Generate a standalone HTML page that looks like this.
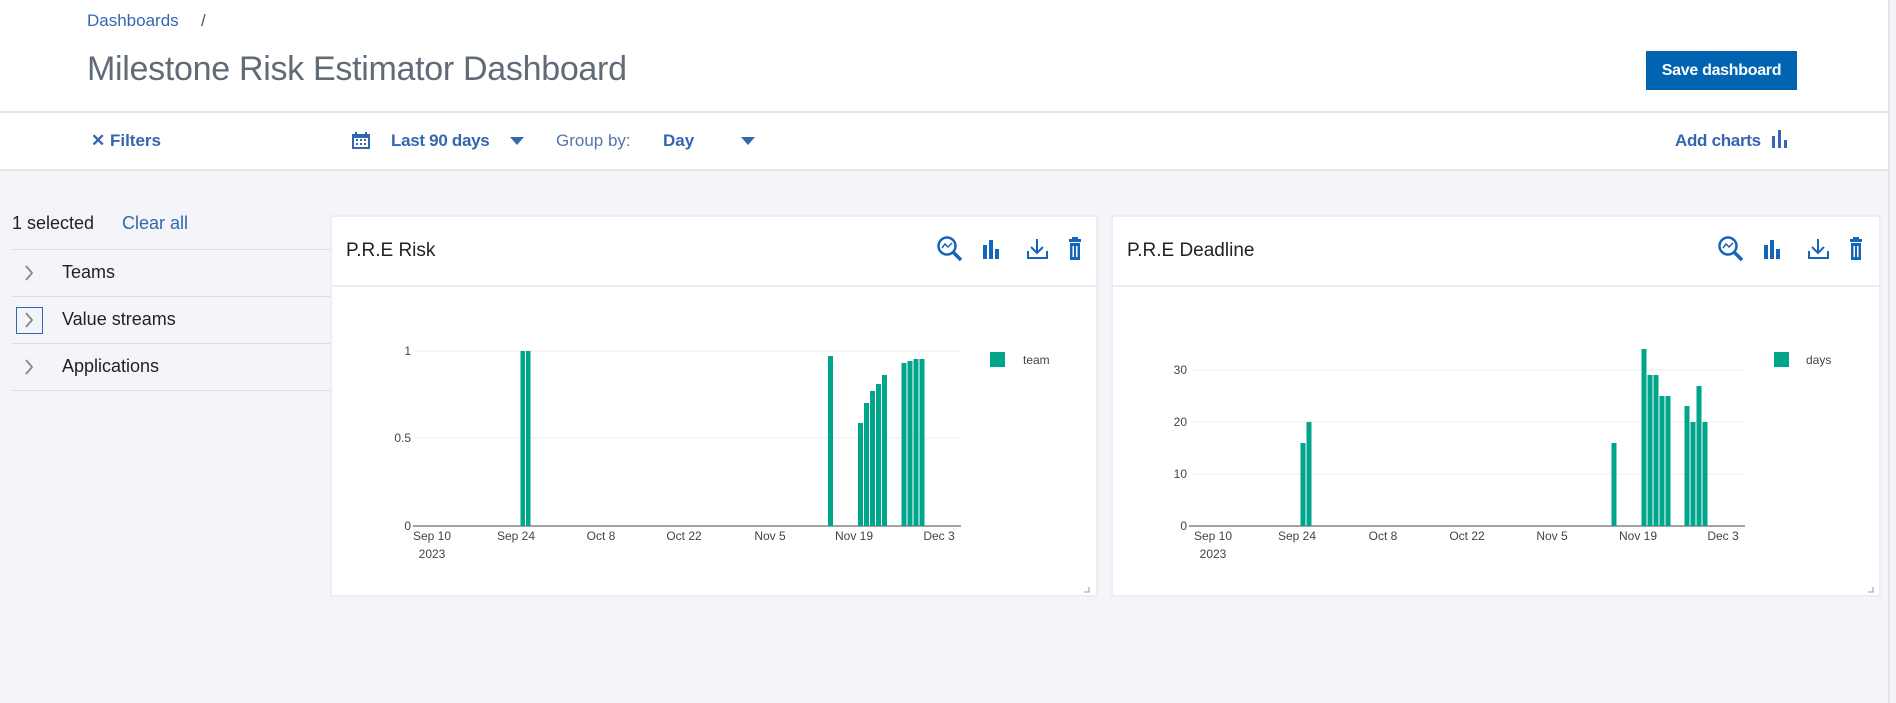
<!DOCTYPE html>
<html><head><meta charset="utf-8"><style>
*{margin:0;padding:0;box-sizing:border-box}
body{width:1896px;height:703px;overflow:hidden;background:#f4f5f8;font-family:"Liberation Sans",sans-serif;position:relative}
.a{position:absolute;white-space:nowrap}
.hdr{position:absolute;left:0;top:0;width:1888px;height:171px;background:#fff;border-bottom:2px solid #e3e5e9}
.sep{position:absolute;left:0;top:111px;width:1888px;height:2px;background:#e3e5e9}
.blue{color:#3566b0}
.card{position:absolute;top:215px;height:382px;background:#fff;border:2px solid #eceef1}
.card .hb{position:absolute;left:0;right:0;top:68px;height:2px;background:#eceef1}
.div{position:absolute;left:12px;width:318px;height:1px;background:#dadde2}
</style></head><body>
<div class="hdr"></div>
<div class="sep"></div>
<div style="position:absolute;left:1888px;top:0;width:2px;height:703px;background:#e3e5e9"></div>
<div class="a blue" style="left:87px;top:11px;font-size:17px">Dashboards</div>
<div class="a" style="left:201px;top:11px;font-size:17px;color:#555">/</div>
<div class="a" style="left:87px;top:50px;font-size:34px;color:#5f6b76;letter-spacing:-0.3px">Milestone Risk Estimator Dashboard</div>
<div class="a" style="left:1646px;top:51px;width:151px;height:39px;background:#0064b0;color:#fff;font-weight:bold;font-size:16px;line-height:39px;text-align:center;letter-spacing:-0.3px">Save dashboard</div>
<div class="a blue" style="left:91px;top:131px;font-size:17px;font-weight:bold">✕ Filters</div>
<svg class="a" style="left:352px;top:132px" width="18" height="17"><rect x="0" y="2" width="18" height="15" fill="#3566b0"/><rect x="2" y="6" width="14" height="9" fill="#fff"/><rect x="3" y="0" width="2" height="4" fill="#3566b0"/><rect x="13" y="0" width="2" height="4" fill="#3566b0"/><g fill="#3566b0"><rect x="4" y="7" width="2" height="2"/><rect x="8" y="7" width="2" height="2"/><rect x="12" y="7" width="2" height="2"/><rect x="4" y="11" width="2" height="2"/><rect x="8" y="11" width="2" height="2"/><rect x="12" y="11" width="2" height="2"/></g></svg>
<div class="a blue" style="left:391px;top:131px;font-size:17px;font-weight:bold;letter-spacing:-0.3px">Last 90 days</div>
<svg class="a" style="left:510px;top:137px" width="14" height="8"><path d="M0 0H14L7 8Z" fill="#3566b0"/></svg>
<div class="a" style="left:556px;top:131px;font-size:17px;color:#5575a8">Group by:</div>
<div class="a blue" style="left:663px;top:131px;font-size:17px;font-weight:bold">Day</div>
<svg class="a" style="left:741px;top:137px" width="14" height="8"><path d="M0 0H14L7 8Z" fill="#3566b0"/></svg>
<div class="a blue" style="left:1675px;top:131px;font-size:17px;font-weight:bold;letter-spacing:-0.3px">Add charts</div>
<svg class="a" style="left:1772px;top:130px" width="18" height="18"><g fill="#3566b0"><rect x="0" y="6" width="3" height="12"/><rect x="6" y="0" width="3" height="18"/><rect x="12" y="10" width="3" height="8"/></g></svg>

<div class="a" style="left:12px;top:213px;font-size:18px;color:#222">1 selected</div>
<div class="a blue" style="left:122px;top:213px;font-size:18px">Clear all</div>
<div class="div" style="top:249px"></div>
<div class="div" style="top:296px"></div>
<div class="div" style="top:343px"></div>
<div class="div" style="top:390px"></div>
<svg class="a" style="left:24px;top:264px" width="10" height="18"><path d="M2 2L8 9L2 16" fill="none" stroke="#888" stroke-width="1.8"/></svg>
<div class="a" style="left:62px;top:262px;font-size:18px;color:#222">Teams</div>
<div class="a" style="left:16px;top:307px;width:27px;height:27px;border:1px solid #3566b0"></div>
<svg class="a" style="left:24px;top:311px" width="10" height="18"><path d="M2 2L8 9L2 16" fill="none" stroke="#888" stroke-width="1.8"/></svg>
<div class="a" style="left:62px;top:309px;font-size:18px;color:#222">Value streams</div>
<svg class="a" style="left:24px;top:358px" width="10" height="18"><path d="M2 2L8 9L2 16" fill="none" stroke="#888" stroke-width="1.8"/></svg>
<div class="a" style="left:62px;top:356px;font-size:18px;color:#222">Applications</div>

<div class="card" style="left:330px;width:768px"><div class="hb"></div></div>
<div class="card" style="left:1111px;width:770px"><div class="hb"></div></div>
<div class="a" style="left:346px;top:240px;font-size:19px;color:#222">P.R.E Risk</div>
<div class="a" style="left:1127px;top:240px;font-size:19px;color:#222">P.R.E Deadline</div>

<svg class="a" style="left:0;top:0" width="1896" height="703">
<defs>
<g id="ic" fill="none" stroke="#1565b8" stroke-width="2.5">
<circle cx="10" cy="10" r="8.5"/><path d="M16 16L24 24" stroke-width="3.5"/><path d="M5 12L8 8L11 11L15 7" stroke-width="1.5"/>
<g fill="#1565b8" stroke="none"><rect x="46" y="9" width="4" height="14"/><rect x="52" y="4" width="4" height="19"/><rect x="58" y="13" width="4" height="10"/></g>
<path d="M100 3V17M94 11L100 17L106 11" stroke-width="2"/><path d="M91 15V22H110V15" stroke-width="2"/>
<g fill="#1565b8" stroke="none"><rect x="135" y="1" width="6" height="2"/><rect x="132" y="3" width="12" height="3"/><path d="M133 7H143V24H133ZM135.5 10V21H137V10ZM139 10V21H140.5V10Z" fill-rule="evenodd"/></g>
</g>
</defs>
<use href="#ic" x="937" y="236"/>
<use href="#ic" x="1718" y="236"/>
<g font-family="Liberation Sans,sans-serif" font-size="12" fill="#444">
<line x1="415" y1="351" x2="961" y2="351" stroke="#eee"/>
<line x1="415" y1="438" x2="961" y2="438" stroke="#eee"/>
<line x1="413" y1="526" x2="961" y2="526" stroke="#444"/>
<text x="411" y="355" text-anchor="end">1</text>
<text x="411" y="442" text-anchor="end">0.5</text>
<text x="411" y="530" text-anchor="end">0</text>
<g text-anchor="middle"><text x="432" y="540">Sep 10</text><text x="432" y="558">2023</text><text x="516" y="540">Sep 24</text><text x="601" y="540">Oct 8</text><text x="684" y="540">Oct 22</text><text x="770" y="540">Nov 5</text><text x="854" y="540">Nov 19</text><text x="939" y="540">Dec 3</text></g>
<g fill="#00a68c">
<rect x="520.5" y="351" width="4.5" height="175"/><rect x="526" y="351" width="4.5" height="175"/>
<rect x="828" y="356" width="5" height="170"/>
<rect x="858" y="423" width="5" height="103"/><rect x="864" y="403" width="5" height="123"/><rect x="870" y="391" width="5" height="135"/><rect x="876" y="384" width="5" height="142"/><rect x="882" y="375" width="5" height="151"/>
<rect x="901.5" y="363" width="5" height="163"/><rect x="907.5" y="361" width="5" height="165"/><rect x="913.5" y="359" width="5" height="167"/><rect x="919.5" y="359" width="5" height="167"/>
<rect x="990" y="352" width="15" height="15"/>
<rect x="1774" y="352" width="15" height="15"/>
</g>
<text x="1023" y="364">team</text>
<line x1="1191" y1="370" x2="1745" y2="370" stroke="#eee"/>
<line x1="1191" y1="422" x2="1745" y2="422" stroke="#eee"/>
<line x1="1191" y1="474" x2="1745" y2="474" stroke="#eee"/>
<line x1="1189" y1="526" x2="1745" y2="526" stroke="#444"/>
<text x="1187" y="374" text-anchor="end">30</text>
<text x="1187" y="426" text-anchor="end">20</text>
<text x="1187" y="478" text-anchor="end">10</text>
<text x="1187" y="530" text-anchor="end">0</text>
<g text-anchor="middle"><text x="1213" y="540">Sep 10</text><text x="1213" y="558">2023</text><text x="1297" y="540">Sep 24</text><text x="1383" y="540">Oct 8</text><text x="1467" y="540">Oct 22</text><text x="1552" y="540">Nov 5</text><text x="1638" y="540">Nov 19</text><text x="1723" y="540">Dec 3</text></g>
<g fill="#00a68c">
<rect x="1300.5" y="443" width="5" height="83"/><rect x="1306.5" y="422" width="5" height="104"/>
<rect x="1611.5" y="443" width="5" height="83"/>
<rect x="1641.5" y="349" width="5" height="177"/><rect x="1647.5" y="375" width="5" height="151"/><rect x="1653.5" y="375" width="5" height="151"/><rect x="1659.5" y="396" width="5" height="130"/><rect x="1665.5" y="396" width="5" height="130"/>
<rect x="1684.5" y="406" width="5" height="120"/><rect x="1690.5" y="422" width="5" height="104"/><rect x="1696.5" y="386" width="5" height="140"/><rect x="1702.5" y="422" width="5" height="104"/>
</g>
<text x="1806" y="364">days</text>
</g>
<path d="M1089 587V592H1084" stroke="#999" fill="none"/>
<path d="M1873 587V592H1868" stroke="#999" fill="none"/>
</svg>
</body></html>
